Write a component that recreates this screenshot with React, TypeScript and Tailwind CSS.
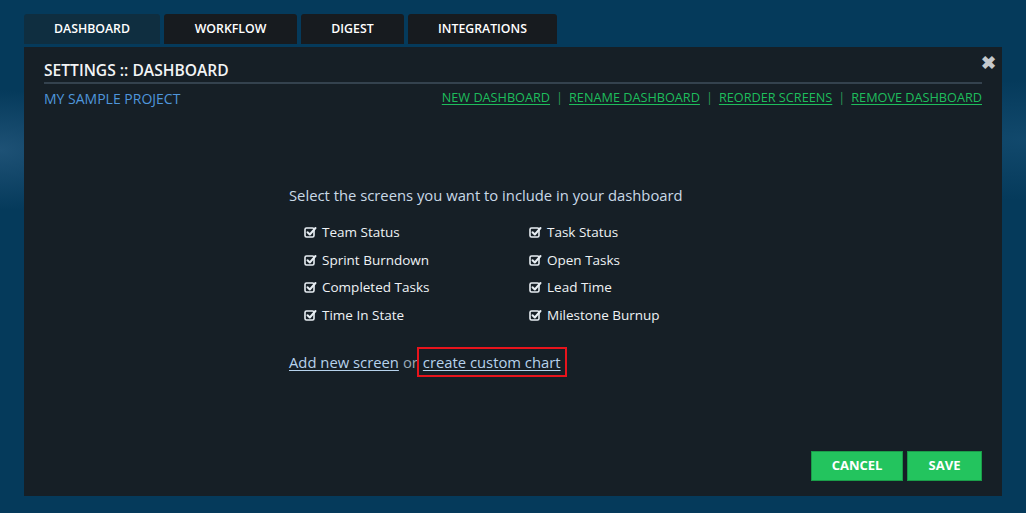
import React from 'react';

const tabs = [
  { label: 'DASHBOARD', w: 'w-[136px]', active: true },
  { label: 'WORKFLOW', w: 'w-[133px]', active: false },
  { label: 'DIGEST', w: 'w-[103px]', active: false },
  { label: 'INTEGRATIONS', w: 'w-[149px]', active: false },
];

const actions = ['NEW DASHBOARD', 'RENAME DASHBOARD', 'REORDER SCREENS', 'REMOVE DASHBOARD'];

const left = ['Team Status', 'Sprint Burndown', 'Completed Tasks', 'Time In State'];
const right = ['Task Status', 'Open Tasks', 'Lead Time', 'Milestone Burnup'];

function CheckIcon() {
  return (
    <svg width="13" height="12" viewBox="0 0 13 12" className="shrink-0">
      <rect x="1" y="2" width="9" height="9" rx="1.5" fill="none" stroke="#e8eef3" strokeWidth="1.6" />
      <path d="M3.5 6.2 L5.8 8.5 L11.5 2" fill="none" stroke="#e8eef3" strokeWidth="2" strokeLinecap="round" strokeLinejoin="round" />
    </svg>
  );
}

function ScreenItem({ label }: { label: string }) {
  return (
    <div className="flex items-center gap-[5px] h-[27.7px]">
      <CheckIcon />
      <span className="text-[13.5px] text-[#eef2f5]">{label}</span>
    </div>
  );
}

export default function App() {
  return (
    <div
      className="w-[1026px] h-[513px] overflow-hidden bg-[#053a5b] pt-[14px] pl-[24px]"
      style={{ fontFamily: '"Open Sans", Lato, sans-serif', backgroundImage: 'radial-gradient(ellipse 120px 60px at 0px 150px, rgba(60,110,150,0.45), transparent), radial-gradient(ellipse 200px 60px at 1026px 140px, rgba(40,100,140,0.35), transparent)' }}
    >
      <div className="flex gap-[4px]">
        {tabs.map((t) => (
          <div
            key={t.label}
            className={`${t.w} h-[30px] rounded-t-[3px] flex items-center justify-center text-[12.3px] font-semibold text-white ${t.active ? 'bg-[#0f2e40]' : 'bg-[#171b1f]'}`}
          >
            {t.label}
          </div>
        ))}
      </div>

      <div className="relative mt-[3px] w-[978px] h-[449px] bg-[#161f26] px-[20px] pt-[12px] flex flex-col">
        <span className="absolute right-[6px] top-[6px] text-[#c4c8cc] text-[18px] font-bold leading-none">✖</span>

        <div className="text-[15.6px] font-semibold text-[#f2f4f6] h-[25px] leading-[22px] border-b-2 border-[#34424e]">
          SETTINGS :: DASHBOARD
        </div>

        <div className="flex justify-between items-center mt-[4px] h-[20px]">
          <span className="text-[14px] text-[#4f96dc]">MY SAMPLE PROJECT</span>
          <div className="flex items-center text-[12.7px] text-[#1ebd5c]">
            {actions.map((a, i) => (
              <React.Fragment key={a}>
                {i > 0 && <span className="px-[6px] text-[#2a9a55]">|</span>}
                <a className="underline underline-offset-2 cursor-pointer">{a}</a>
              </React.Fragment>
            ))}
          </div>
        </div>

        <div className="pl-[245px] mt-[76px]">
          <div className="text-[14.8px] text-[#c9d9e6]">Select the screens you want to include in your dashboard</div>
          <div className="flex pl-[15px] mt-[12px]">
            <div className="w-[225px]">
              {left.map((l) => (
                <ScreenItem key={l} label={l} />
              ))}
            </div>
            <div>
              {right.map((l) => (
                <ScreenItem key={l} label={l} />
              ))}
            </div>
          </div>
          <div className="mt-[18px] text-[14.8px] flex items-center">
            <a className="underline underline-offset-2 text-[#b6d2ec] cursor-pointer">Add new screen</a>
            <span className="text-[#9aa9b6] ml-[4px]">or</span>
            <span className="border-2 border-[#e8141c] px-[4px] py-[2px] -ml-[1px]">
              <a className="underline underline-offset-2 text-[#b6d2ec] cursor-pointer">create custom chart</a>
            </span>
          </div>
        </div>

        <div className="mt-auto mb-[15px] flex justify-end gap-[4px]">
          <button className="w-[92px] h-[30px] bg-[#23c45e] border border-[#1a9d49] text-white text-[13px] font-bold">CANCEL</button>
          <button className="w-[75px] h-[30px] bg-[#23c45e] border border-[#1a9d49] text-white text-[13px] font-bold">SAVE</button>
        </div>
      </div>
    </div>
  );
}
